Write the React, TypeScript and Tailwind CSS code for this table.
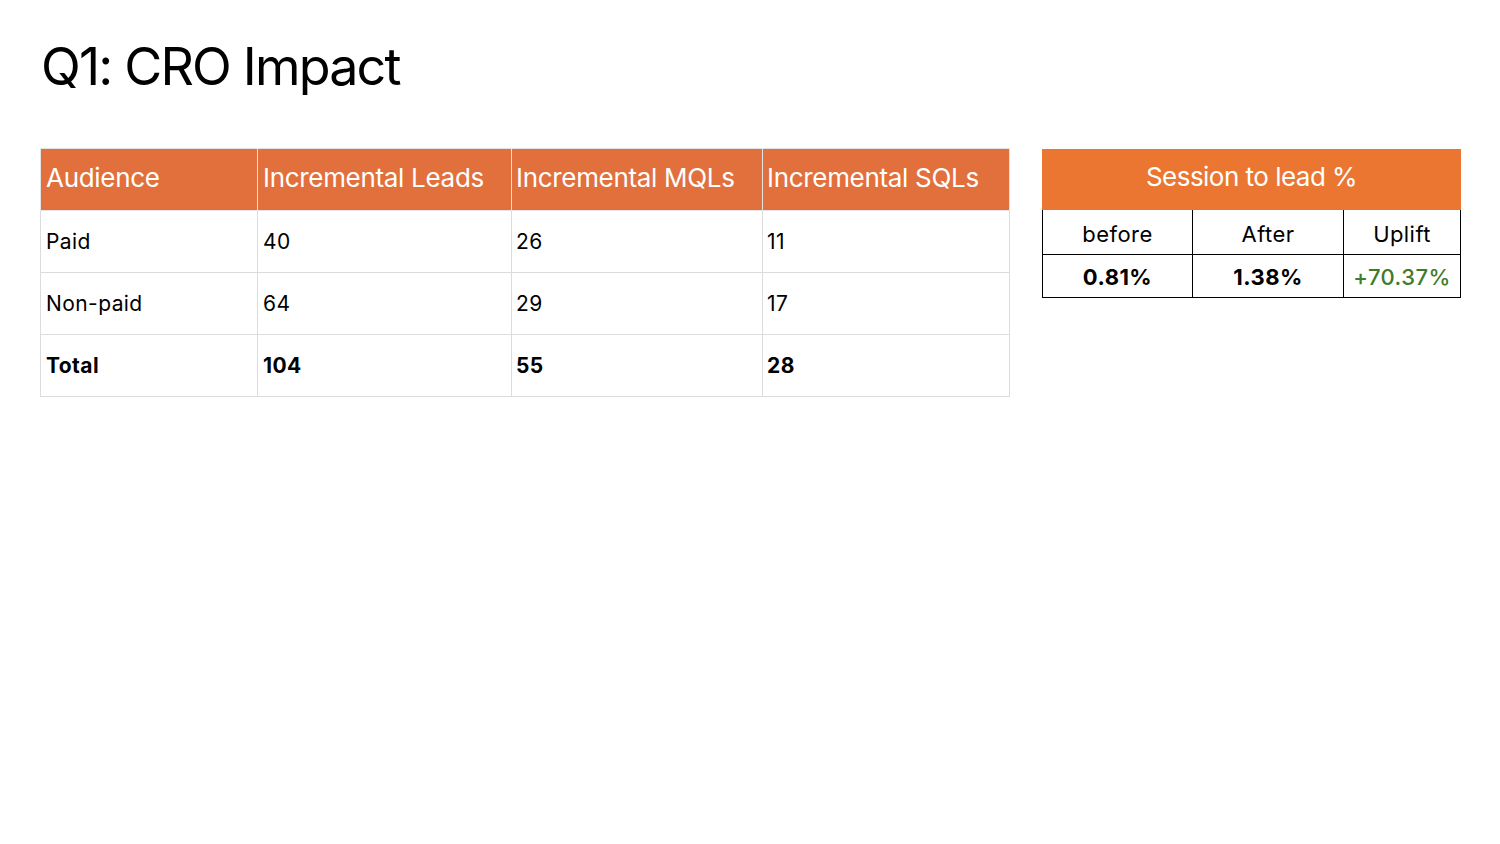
import React from 'react'

const rows = [
  { audience: 'Paid', leads: '40', mqls: '26', sqls: '11' },
  { audience: 'Non-paid', leads: '64', mqls: '29', sqls: '17' },
  { audience: 'Total', leads: '104', mqls: '55', sqls: '28', total: true },
]

export default function App() {
  return (
    <div className="w-[1500px] h-[844px] bg-white text-black font-['Inter','Noto_Sans',sans-serif]">
      <div className="pl-[41px] pt-[37px]">
        <h1 className="text-[52px] leading-[60px] tracking-[-0.035em] font-normal">Q1: CRO Impact</h1>
      </div>

      <div className="flex items-start pl-[40px] pt-[51px] gap-[32px]">
        {/* ::Impact table */}
        <table className="border-collapse table-fixed w-[969px]">
          <colgroup>
            <col className="w-[217px]" />
            <col className="w-[254px]" />
            <col className="w-[251px]" />
            <col className="w-[247px]" />
          </colgroup>
          <thead>
            <tr className="h-[62px] bg-[#e2703c] text-white text-[26px] tracking-[-0.012em]">
              <th className="font-normal text-left pl-[5px] pb-[5px] border border-[#e4e4e4]">Audience</th>
              <th className="font-normal text-left pl-[5px] pb-[5px] border border-[#e4e4e4]">Incremental Leads</th>
              <th className="font-normal text-left pl-[4px] pb-[5px] border border-[#e4e4e4]">Incremental MQLs</th>
              <th className="font-normal text-left pl-[4px] pb-[5px] border border-[#e4e4e4]">Incremental SQLs</th>
            </tr>
          </thead>
          <tbody>
            {rows.map((r) => (
              <tr key={r.audience} className={`h-[62px] text-[21px] tracking-[0.02em] ${r.total ? 'font-bold' : 'font-normal'}`}>
                <td className="pl-[5px] border border-[#dcdcdc]">{r.audience}</td>
                <td className="pl-[5px] border border-[#dcdcdc]">{r.leads}</td>
                <td className="pl-[4px] border border-[#dcdcdc]">{r.mqls}</td>
                <td className="pl-[4px] border border-[#dcdcdc]">{r.sqls}</td>
              </tr>
            ))}
          </tbody>
        </table>

        {/* ::Session to lead table */}
        <div className="w-[419px] mt-px">
          <div className="h-[61px] bg-[#eb7632] text-white text-[26px] tracking-[-0.02em] flex items-center justify-center pb-[7px]">
            Session to lead %
          </div>
          <div className="grid grid-cols-[150px_151px_1fr] border-l border-black text-[22px] tracking-[0.02em]">
            <div className="h-[45px] flex items-center justify-center border-r border-b border-black pt-[4px]">before</div>
            <div className="h-[45px] flex items-center justify-center border-r border-b border-black pt-[4px]">After</div>
            <div className="h-[45px] flex items-center justify-center border-r border-b border-black pt-[4px]">Uplift</div>
            <div className="h-[43px] flex items-center justify-center border-r border-b border-black font-bold pt-[3px]">0.81%</div>
            <div className="h-[43px] flex items-center justify-center border-r border-b border-black font-bold pt-[3px]">1.38%</div>
            <div className="h-[43px] flex items-center justify-center border-r border-b border-black text-[#3e7b2b] font-medium pt-[3px]">+70.37%</div>
          </div>
        </div>
      </div>
    </div>
  )
}
